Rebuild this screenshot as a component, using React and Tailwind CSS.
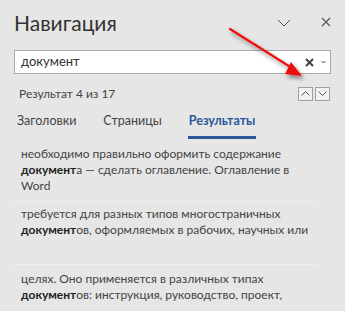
import React from "react";

const results = [
  {
    lines: [
      <>необходимо правильно оформить содержание</>,
      <>
        <b className="font-bold text-[#222]">документ</b>а — сделать оглавление. Оглавление в
      </>,
      <>Word</>,
    ],
    pt: "pt-[7px]",
  },
  {
    lines: [
      <>требуется для разных типов многостраничных</>,
      <>
        <b className="font-bold text-[#222]">документ</b>ов, оформляемых в рабочих, научных или
      </>,
    ],
    pt: "pt-[4px]",
  },
  {
    lines: [
      <>целях. Оно применяется в различных типах</>,
      <>
        <b className="font-bold text-[#222]">документ</b>ов: инструкция, руководство, проект,
      </>,
    ],
    pt: "pt-[6px]",
  },
];

export default function App() {
  return (
    <div
      className="relative w-[345px] h-[311px] overflow-hidden bg-[#e6e6e6] text-[#444]"
      style={{ fontFamily: '"Segoe UI", Lato, "Open Sans", sans-serif' }}
    >
      {/* header */}
      <div className="flex items-center h-[44px] pl-[14px] pr-[14px]">
        <h1 className="text-[21px] leading-none text-[#333] mt-[1px]">Навигация</h1>
        <div className="ml-auto flex items-center gap-[30px]">
          <svg width="14" height="8" viewBox="0 0 14 8" className="mt-[2px]">
            <path d="M1 1 L7 7 L13 1" fill="none" stroke="#555" strokeWidth="1" />
          </svg>
          <svg width="10" height="10" viewBox="0 0 10 10">
            <path d="M1 1 L9 9 M9 1 L1 9" fill="none" stroke="#555" strokeWidth="1.1" />
          </svg>
        </div>
      </div>

      {/* search */}
      <div className="mx-[14px] mt-[6px] h-[24px] flex items-center bg-white border border-[#ababab]">
        <span className="pl-[6px] text-[13px] text-[#333]">документ</span>
        <div className="ml-auto flex items-center gap-[7px] pr-[4px]">
          <svg width="9" height="9" viewBox="0 0 9 9">
            <path d="M1 1 L8 8 M8 1 L1 8" fill="none" stroke="#444" strokeWidth="2" />
          </svg>
          <svg width="5" height="4" viewBox="0 0 5 4">
            <path d="M0.5 1 L2.5 3 L4.5 1" fill="none" stroke="#444" strokeWidth="1" />
          </svg>
        </div>
      </div>

      {/* results count */}
      <div className="flex items-center mt-[12px] pl-[19px] pr-[15px] h-[15px]">
        <span className="text-[12px]">Результат 4 из 17</span>
        <div className="ml-auto flex gap-[2px]">
          <div className="w-[15px] h-[14px] border border-[#a0a0a0] bg-[#f2f2f2] flex items-center justify-center">
            <svg width="9" height="5" viewBox="0 0 9 5">
              <path d="M0.5 4.5 L4.5 0.5 L8.5 4.5" fill="none" stroke="#555" strokeWidth="1" />
            </svg>
          </div>
          <div className="w-[15px] h-[14px] border border-[#a0a0a0] bg-[#f2f2f2] flex items-center justify-center">
            <svg width="9" height="5" viewBox="0 0 9 5">
              <path d="M0.5 0.5 L4.5 4.5 L8.5 0.5" fill="none" stroke="#555" strokeWidth="1" />
            </svg>
          </div>
        </div>
      </div>

      {/* tabs */}
      <div className="flex mt-[11px] pl-[17px] text-[12.5px]">
        <div className="pb-[7px]">Заголовки</div>
        <div className="pb-[7px] ml-[27px]">Страницы</div>
        <div className="ml-[26px] flex flex-col items-stretch">
          <span className="font-bold text-[#2b579a] px-[1px]">Результаты</span>
          <div className="h-[3px] bg-[#2b579a] mt-[5px]" />
        </div>
      </div>

      {/* result list */}
      <div className="mx-[14px] mr-[27px]">
        {results.map((r, i) => (
          <div key={i} className={`h-[63px] border-b border-[#ededed] ${r.pt} pl-[7px] text-[12px] leading-[16px] text-[#444]`}>
            {r.lines.map((l, j) => (
              <div key={j} className="whitespace-nowrap">
                {l}
              </div>
            ))}
          </div>
        ))}
      </div>

      {/* red arrow overlay */}
      <svg className="absolute left-0 top-0 pointer-events-none" width="345" height="311">
        <defs>
          <filter id="sh" x="-20%" y="-20%" width="140%" height="140%">
            <feDropShadow dx="2" dy="3" stdDeviation="2" floodColor="#000" floodOpacity="0.45" />
          </filter>
        </defs>
        <g filter="url(#sh)">
          <line x1="230" y1="29" x2="292" y2="68" stroke="#ee1111" strokeWidth="2.2" strokeLinecap="round" />
          <polygon points="302,76 285,74 291,62" fill="#ee1111" />
        </g>
      </svg>
    </div>
  );
}
